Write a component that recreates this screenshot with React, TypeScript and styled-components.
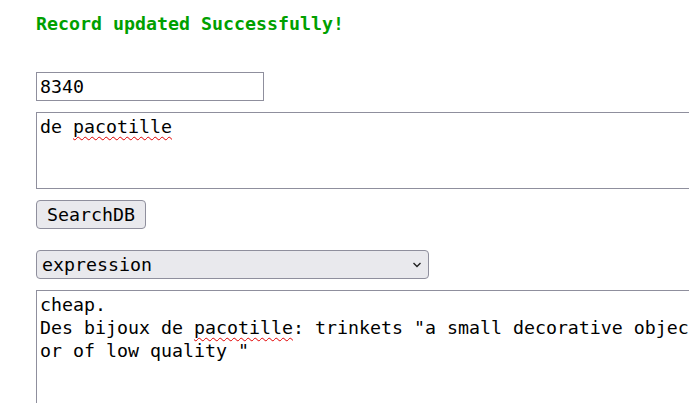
import React from "react";
import styled, { createGlobalStyle } from "styled-components";

const GlobalStyle = createGlobalStyle`
  html, body {
    margin: 0;
    padding: 0;
    background: #ffffff;
    overflow: hidden;
  }
  body {
    font-family: "DejaVu Sans Mono", "Liberation Mono", monospace;
  }
`;

const Page = styled.div`
  display: flex;
  flex-direction: column;
  align-items: flex-start;
  padding-left: 36px;
  width: 1000px;
  font-family: "DejaVu Sans Mono", "Liberation Mono", monospace;
  font-size: 18.27px;
  color: #000;
`;

const Message = styled.div`
  margin-top: 13px;
  font-weight: bold;
  line-height: 21px;
  color: #00a000;
`;

const TextInput = styled.div`
  box-sizing: border-box;
  margin-top: 38px;
  width: 228px;
  height: 29px;
  border: 1px solid #8f8f9d;
  padding: 0 3px;
  display: flex;
  align-items: center;
  line-height: 21px;
`;

const TextArea = styled.div<{ $height: number; $top: number }>`
  box-sizing: border-box;
  margin-top: ${(p) => p.$top}px;
  width: 900px;
  height: ${(p) => p.$height}px;
  border: 1px solid #8f8f9d;
  padding: 2px 3px;
  line-height: 23px;
  white-space: pre;
  overflow: hidden;
`;

const Misspelled = styled.span`
  text-decoration: underline wavy #e00000;
  text-decoration-thickness: 1px;
  text-underline-offset: 3px;
  text-decoration-skip-ink: none;
`;

const Button = styled.div`
  box-sizing: border-box;
  margin-top: 11px;
  height: 29px;
  padding: 0 10px;
  border: 1px solid #8f8f9d;
  border-radius: 4px;
  background: #e9e9ed;
  display: flex;
  align-items: center;
  line-height: 21px;
`;

const SelectBox = styled.div`
  position: relative;
  box-sizing: border-box;
  margin-top: 21px;
  width: 393px;
  height: 29px;
  padding: 0 5px;
  border: 1px solid #8f8f9d;
  border-radius: 4px;
  background: #e9e9ed;
  display: flex;
  align-items: center;
  line-height: 21px;
`;

const Chevron = styled.svg`
  position: absolute;
  right: 6px;
  top: 10px;
`;

export default function App() {
  return (
    <>
      <GlobalStyle />
      <Page>
        <Message>Record updated Successfully!</Message>
        <TextInput>8340</TextInput>
        <TextArea $height={77} $top={11}>
          de <Misspelled>pacotille</Misspelled>
        </TextArea>
        <Button>SearchDB</Button>
        <SelectBox>
          expression
          <Chevron width="10" height="8" viewBox="0 0 10 8">
            <path d="M1.5 2 L5 5.5 L8.5 2" fill="none" stroke="#222" strokeWidth="1.4" />
          </Chevron>
        </SelectBox>
        <TextArea $height={130} $top={11}>
          {"cheap.\nDes bijoux de "}
          <Misspelled>pacotille</Misspelled>
          {': trinkets "a small decorative object\nor of low quality "'}
        </TextArea>
      </Page>
    </>
  );
}
